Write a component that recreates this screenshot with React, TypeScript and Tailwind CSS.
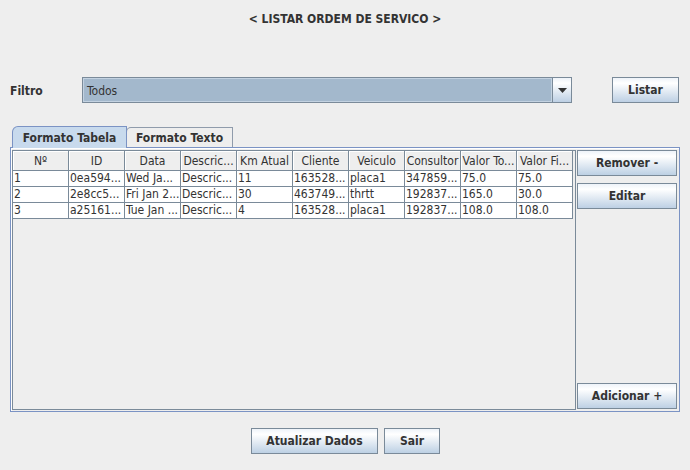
import React from "react";

const btn =
  "border border-[#7a8a99] bg-[linear-gradient(180deg,#eef3f9_0%,#ffffff_22%,#bdd0e4_100%)] flex items-center justify-center font-bold text-[12px] text-[#333333] whitespace-nowrap";

const headers = ["Nº", "ID", "Data", "Descric...", "Km Atual", "Cliente", "Veiculo", "Consultor", "Valor To...", "Valor Fi..."];
const rows = [
  ["1", "0ea594...", "Wed Ja...", "Descric...", "11", "163528...", "placa1", "347859...", "75.0", "75.0"],
  ["2", "2e8cc5...", "Fri Jan 2...", "Descric...", "30", "463749...", "thrtt", "192837...", "165.0", "30.0"],
  ["3", "a25161...", "Tue Jan ...", "Descric...", "4", "163528...", "placa1", "192837...", "108.0", "108.0"],
];

export default function App() {
  return (
    <div className="w-[690px] h-[470px] bg-[#eeeeee] text-[#333333] flex flex-col font-['DejaVu_Sans_Condensed','DejaVu_Sans',sans-serif] overflow-hidden">
      <div className="h-[37px] flex items-center justify-center font-bold text-[12px]">
        &lt; LISTAR ORDEM DE SERVICO &gt;
      </div>

      <div className="mt-[40px] h-[26px] flex items-center pl-[10px]">
        <div className="w-[72px] font-bold text-[12px] pt-[1px]">Filtro</div>
        <div className="w-[490px] h-[26px] border border-[#7a8a99] flex">
          <div className="flex-1 bg-[#a3b8cc] border border-[#c3d2e1] flex items-center pl-[3px] pt-[1px] text-[12px]">
            Todos
          </div>
          <div className="w-[19px] border-l border-[#7a8a99] bg-[linear-gradient(180deg,#eef3f9_0%,#ffffff_22%,#bdd0e4_100%)] flex items-center justify-center">
            <svg width="9" height="5" viewBox="0 0 9 5">
              <polygon points="0,0 9,0 4.5,5" fill="#333333" />
            </svg>
          </div>
        </div>
        <div className={`${btn} ml-[40px] w-[67px] h-[26px]`}>Listar</div>
      </div>

      <div className="mt-[23px] ml-[10px] w-[670px] flex flex-col">
        <div className="h-[21px] flex items-end pl-[2px]">
          <div className="relative w-[115px] h-[22px] -mb-[1px] z-10 bg-[#c8daed] border border-b-0 border-[#7b93c4] rounded-tl-[6px] flex items-center justify-center font-bold text-[12px] pt-[1px]">
            Formato Tabela
          </div>
          <div className="w-[107px] h-[20px] -ml-[1px] bg-[#eeeeee] border border-b-0 border-[#8f9bab] rounded-tl-[5px] flex items-center justify-center font-bold text-[12px] pt-[1px]">
            Formato Texto
          </div>
        </div>
        <div className="h-[265px] border border-[#7b93c4] bg-[#eeeeee] flex pt-[2px] pb-[1px] pl-[1px] pr-[2px] shadow-[inset_1px_1px_0_#ffffff]">
          <div className="w-[564px] h-full border border-[#7a8a99] bg-[#eeeeee] flex flex-col">
            <div className="flex h-[20px]">
              {headers.map((h, i) => (
                <div
                  key={i}
                  className="w-[56px] h-[20px] border-r border-b border-[#7a8a99] shadow-[inset_1px_1px_0_#ffffff] flex items-center justify-center text-[12px] whitespace-nowrap overflow-hidden"
                >
                  {h}
                </div>
              ))}
            </div>
            {rows.map((r, ri) => (
              <div key={ri} className="flex h-[16px]">
                {r.map((c, ci) => (
                  <div
                    key={ci}
                    className="w-[56px] h-[16px] bg-white border-r border-b border-[#7a8a99] flex items-center pl-[1px] text-[12px] leading-[15px] whitespace-nowrap overflow-hidden"
                  >
                    {c}
                  </div>
                ))}
              </div>
            ))}
          </div>
          <div className="ml-[1px] w-[100px] flex flex-col">
            <div className={`${btn} h-[26px]`}>Remover -</div>
            <div className={`${btn} h-[26px] mt-[7px]`}>Editar</div>
            <div className={`${btn} h-[26px] mt-auto mb-[1px]`}>Adicionar +</div>
          </div>
        </div>
      </div>

      <div className="mt-[16px] flex justify-center gap-[6px] pl-[1px]">
        <div className={`${btn} w-[127px] h-[26px]`}>Atualizar Dados</div>
        <div className={`${btn} w-[56px] h-[26px]`}>Sair</div>
      </div>
    </div>
  );
}
